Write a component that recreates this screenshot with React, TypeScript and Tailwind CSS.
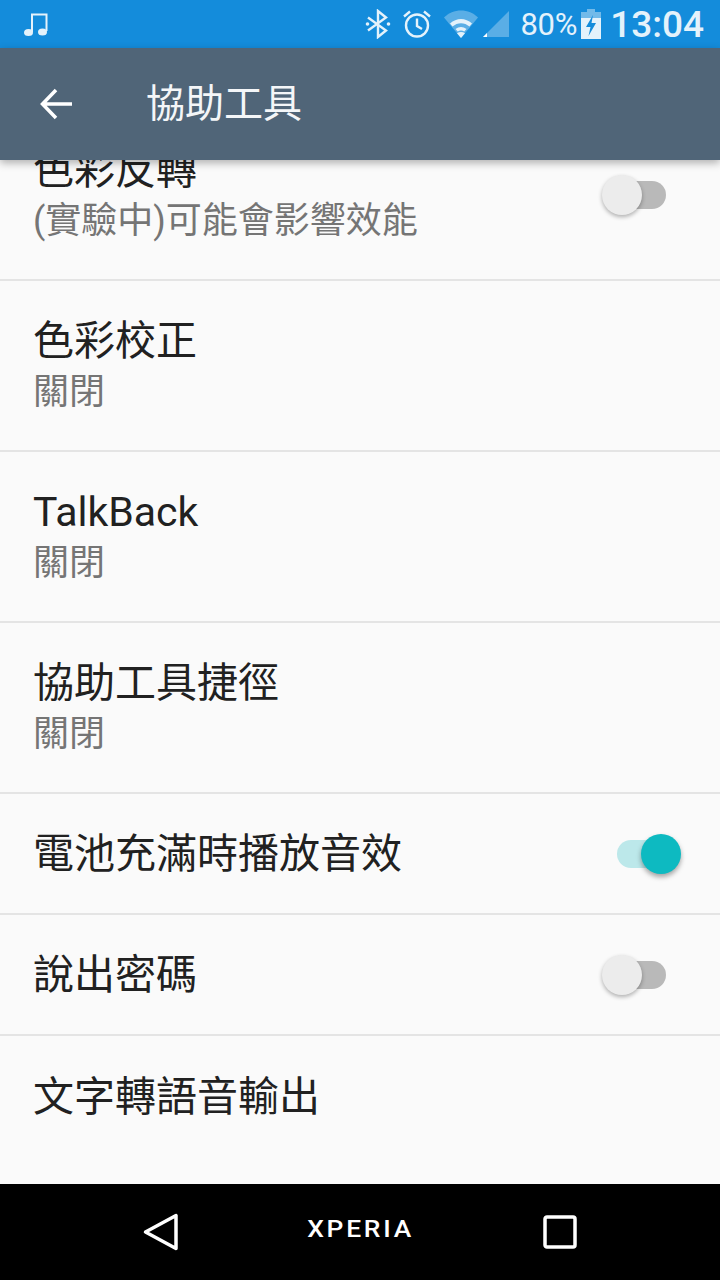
const FONT = "font-['Roboto','Noto_Sans_CJK_TC',sans-serif]";

const Toggle = ({ on }: { on?: boolean }) =>
  on ? (
    <div className="relative w-[64px] h-[40px] flex items-center">
      <div className="w-[56px] h-[28px] rounded-full bg-[#bce8ea]" />
      <div className="absolute right-0 top-0 w-[40px] h-[40px] rounded-full bg-[#0dbac1] shadow-[0_3px_5px_rgba(0,0,0,0.35)]" />
    </div>
  ) : (
    <div className="relative w-[64px] h-[40px] flex items-center justify-end">
      <div className="w-[56px] h-[28px] rounded-full bg-[#b9b9b9]" />
      <div className="absolute left-0 top-0 w-[40px] h-[40px] rounded-full bg-[#ececec] shadow-[0_2px_4px_rgba(0,0,0,0.3)]" />
    </div>
  );

const Row = ({
  title,
  summary,
  toggle,
  on,
  last,
}: {
  title: string;
  summary?: string;
  toggle?: boolean;
  on?: boolean;
  last?: boolean;
}) => (
  <div
    className={`flex items-center justify-between shrink-0 pl-[33px] ${on ? 'pr-[39px]' : 'pr-[54px]'} ${
      summary ? 'h-[171px]' : 'h-[121px]'
    } ${last ? '' : 'border-b-2 border-[#e4e4e4]'}`}
  >
    <div className="flex flex-col">
      <div className="text-[41px] leading-[52px] text-[#212121] whitespace-nowrap">{title}</div>
      {summary && <div className="text-[36px] leading-[50px] text-[#757575] whitespace-nowrap">{summary}</div>}
    </div>
    {toggle && <Toggle on={on} />}
  </div>
);

const StatusBar = () => (
  <div className="h-[48px] bg-[#148cdb] flex items-center justify-between pl-[23px] pr-[16px] shrink-0">
    <svg width="26" height="26" viewBox="0 0 26 26" fill="none" className="text-[#e4f2fb]">
      <path d="M9 21V3.5h14.5V20" stroke="currentColor" strokeWidth="2" />
      <ellipse cx="5.5" cy="21.5" rx="4.5" ry="3.5" fill="currentColor" />
      <ellipse cx="19.5" cy="21" rx="4.5" ry="3.5" fill="currentColor" />
    </svg>
    <div className="flex items-center text-[#e4f2fb]">
      <svg width="26" height="30" viewBox="0 0 26 30" fill="none" className="mr-[11px]">
        <path d="M3 8.5l18 13-8 6.5V2l8 6.5-18 13" stroke="currentColor" strokeWidth="2.4" />
        <circle cx="2.5" cy="15" r="1.8" fill="currentColor" />
        <circle cx="23.5" cy="15" r="1.8" fill="currentColor" />
      </svg>
      <svg width="30" height="30" viewBox="0 0 30 30" fill="none" className="mr-[12px]">
        <circle cx="15" cy="16.5" r="11" stroke="currentColor" strokeWidth="2.4" />
        <path d="M15 9.5v7.5l5 3M2 7.5L8 2.5M28 7.5L22 2.5" stroke="currentColor" strokeWidth="2.4" />
      </svg>
      <svg width="34" height="28" viewBox="0 0 34 28" className="mr-[4px]">
        <path d="M0 7.5C9-2 25-2 34 7.5L17 28z" fill="#ffffff" fillOpacity="0.3" />
        <path d="M6 13.5c6.500-6 15.500-6 22 0l-2.500 3c-5-4.500-12-4.500-17 0z" fill="currentColor" />
        <path d="M11.500 19c3.500-2.800 7.500-2.800 11 0l-2.200 2.600c-2-1.500-4.600-1.500-6.600 0z" fill="currentColor" />
        <path d="M17 28l-4-4.800c2.500-1.700 5.500-1.700 8 0z" fill="currentColor" />
      </svg>
      <svg width="28" height="28" viewBox="0 0 28 28" className="mr-[10px]">
        <path d="M1 27L27 1v26z" fill="#ffffff" fillOpacity="0.3" />
        <path d="M1 27l4-4v4z" fill="#ffffff" />
      </svg>
      <span className="text-[31px] leading-none mr-[4px] tracking-[-0.3px]">80%</span>
      <svg width="20" height="30" viewBox="0 0 20 30" className="mr-[9px]">
        <path d="M6 0h8v3h6v8H0V3h6z" fill="#ffffff" fillOpacity="0.4" />
        <path d="M0 9h20v21H0z" fill="currentColor" />
        <path d="M12 6L5 18h4.500L7.500 27 15 14h-4.500z" fill="#148cdb" />
      </svg>
      <span className="text-[37px] leading-none font-medium">13:04</span>
    </div>
  </div>
);

const NavBar = () => (
  <div className="h-[96px] bg-black flex items-center justify-between pl-[143px] pr-[143px] shrink-0">
    <svg width="36" height="38" viewBox="0 0 36 38" fill="none">
      <path d="M33 2.500v33L2.500 19z" stroke="#fff" strokeWidth="3.500" strokeLinejoin="round" />
    </svg>
    <span className="text-[24px] leading-none text-white font-medium tracking-[2.5px] -mt-[6px] scale-x-[1.1]">XPERIA</span>
    <svg width="34" height="34" viewBox="0 0 34 34" fill="none">
      <rect x="2" y="2" width="30" height="30" rx="2" stroke="#fff" strokeWidth="3.500" />
    </svg>
  </div>
);

export default function App() {
  return (
    <div className={`w-[720px] h-[1280px] flex flex-col overflow-hidden bg-[#fafafa] ${FONT}`}>
      <StatusBar />
      <div className="relative z-10 h-[112px] bg-[#506578] flex items-center shrink-0 pl-[40px] shadow-[0_3px_8px_rgba(0,0,0,0.3)]">
        <svg width="32" height="32" viewBox="0 0 32 32" fill="none">
          <path d="M32 16H3M16 2L2.500 16 16 30" stroke="#fff" strokeWidth="3.500" />
        </svg>
        <span className="ml-[74px] text-[39px] leading-none text-[#f4f6f8]">協助工具</span>
      </div>
      <div className="flex-1 overflow-hidden flex flex-col">
        <div className="-mt-[50px] flex flex-col">
          <Row title="色彩反轉" summary="(實驗中)可能會影響效能" toggle />
          <Row title="色彩校正" summary="關閉" />
          <Row title="TalkBack" summary="關閉" />
          <Row title="協助工具捷徑" summary="關閉" />
          <Row title="電池充滿時播放音效" toggle on />
          <Row title="說出密碼" toggle />
          <Row title="文字轉語音輸出" last />
        </div>
      </div>
      <NavBar />
    </div>
  );
}
